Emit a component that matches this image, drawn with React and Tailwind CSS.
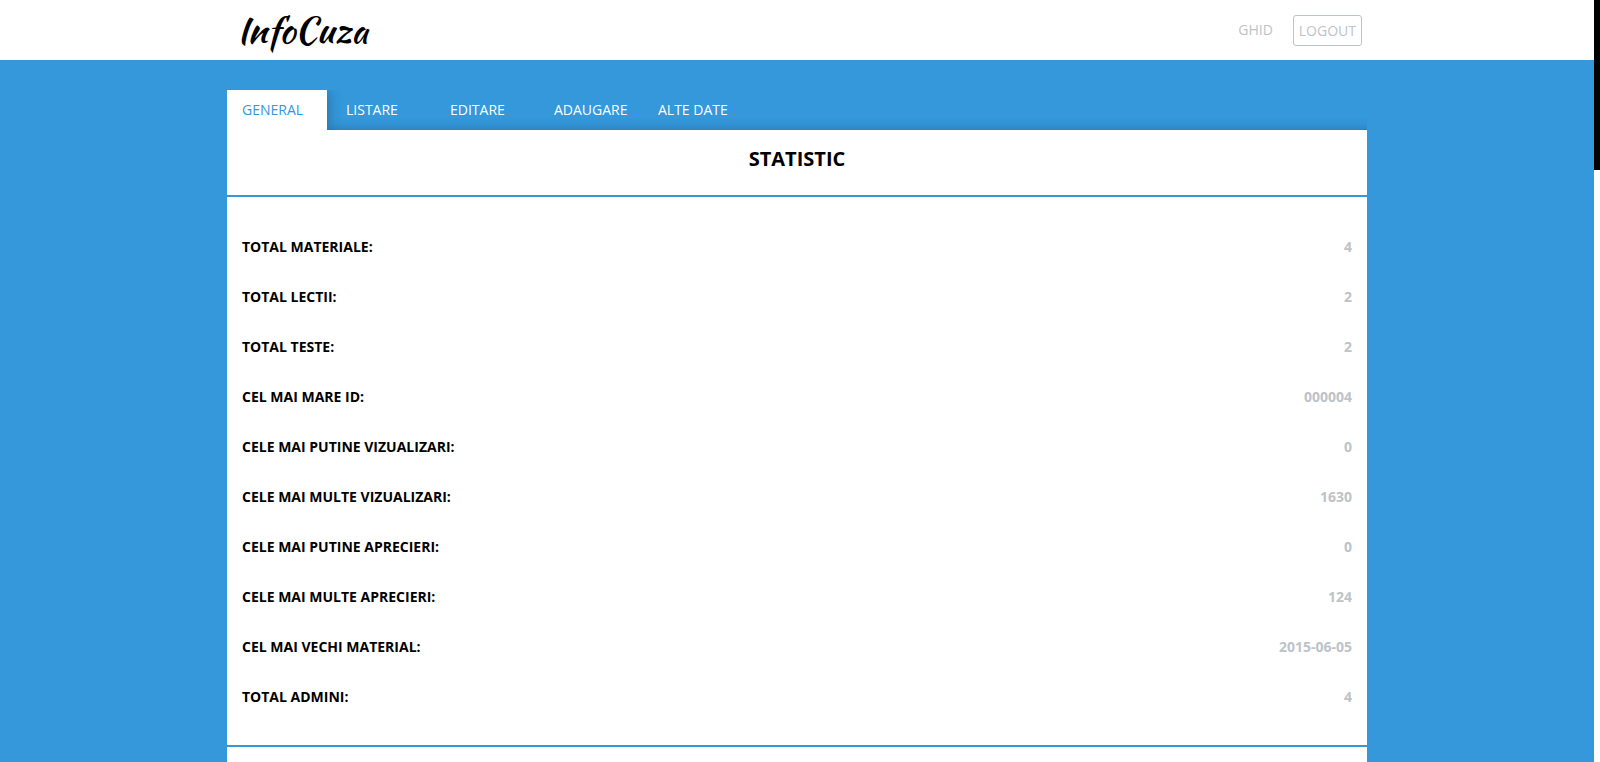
const tabs = ['GENERAL', 'LISTARE', 'EDITARE', 'ADAUGARE', 'ALTE DATE'];

const stats = [
  ['TOTAL MATERIALE:', '4'],
  ['TOTAL LECTII:', '2'],
  ['TOTAL TESTE:', '2'],
  ['CEL MAI MARE ID:', '000004'],
  ['CELE MAI PUTINE VIZUALIZARI:', '0'],
  ['CELE MAI MULTE VIZUALIZARI:', '1630'],
  ['CELE MAI PUTINE APRECIERI:', '0'],
  ['CELE MAI MULTE APRECIERI:', '124'],
  ['CEL MAI VECHI MATERIAL:', '2015-06-05'],
  ['TOTAL ADMINI:', '4'],
];

function Header() {
  return (
    <header className="shrink-0 bg-white">
      <div className="mx-auto flex h-[60px] max-w-[1140px] items-center justify-between pl-[10px] pr-[5px]">
        <a href="#" className="font-['Kaushan_Script','Liberation_Serif',serif] text-4xl leading-[60px] text-black">
          InfoCuza
        </a>
        <div className="flex items-center gap-5 text-sm text-[#bdc3c7]">
          <a href="#ghid">GHID</a>
          <button type="button" className="h-[31px] rounded-[3px] border border-[#bdc3c7] px-[5px] pt-0.5">
            LOGOUT
          </button>
        </div>
      </div>
    </header>
  );
}

function Tabs() {
  return (
    <nav className="flex gap-1 overflow-hidden text-sm text-white shadow-[inset_0_-12px_12px_-12px_rgba(0,0,0,0.25)]">
      {tabs.map((tab, i) => (
        <a
          key={tab}
          href={'#' + tab.toLowerCase().replace(' ', '-')}
          className={
            i === 0
              ? 'w-[100px] bg-white px-[15px] leading-10 text-[#3498db] shadow-[0_0_15px_rgba(0,0,0,0.3)]'
              : 'w-[100px] px-[15px] leading-10 whitespace-nowrap'
          }
        >
          {tab}
        </a>
      ))}
    </nav>
  );
}

export default function App() {
  return (
    <div className="flex h-screen bg-[#3498db] font-['Open_Sans',sans-serif] text-black">
      <div className="flex min-w-0 flex-1 flex-col overflow-y-auto [scrollbar-width:none]">
        <Header />
        <div className="mx-auto flex w-full max-w-[1140px] flex-1 flex-col pt-[30px]">
          <Tabs />
          <main className="flex-1 bg-white">
            <h1 className="border-b-2 border-[#3498db] pt-[14px] pb-[21px] text-center text-xl leading-[30px] font-bold">
              STATISTIC
            </h1>
            <dl className="border-b-2 border-[#3498db] px-[15px] pt-[25px] pb-[23px] text-sm leading-[50px] font-bold">
              {stats.map(([label, value]) => (
                <div key={label} className="flex justify-between">
                  <dt>{label}</dt>
                  <dd className="text-[#bdc3c7]">{value}</dd>
                </div>
              ))}
            </dl>
          </main>
        </div>
      </div>
      <div aria-hidden="true" className="w-[6px] shrink-0 bg-white">
        <div className="h-[170px] bg-black" />
      </div>
    </div>
  );
}
